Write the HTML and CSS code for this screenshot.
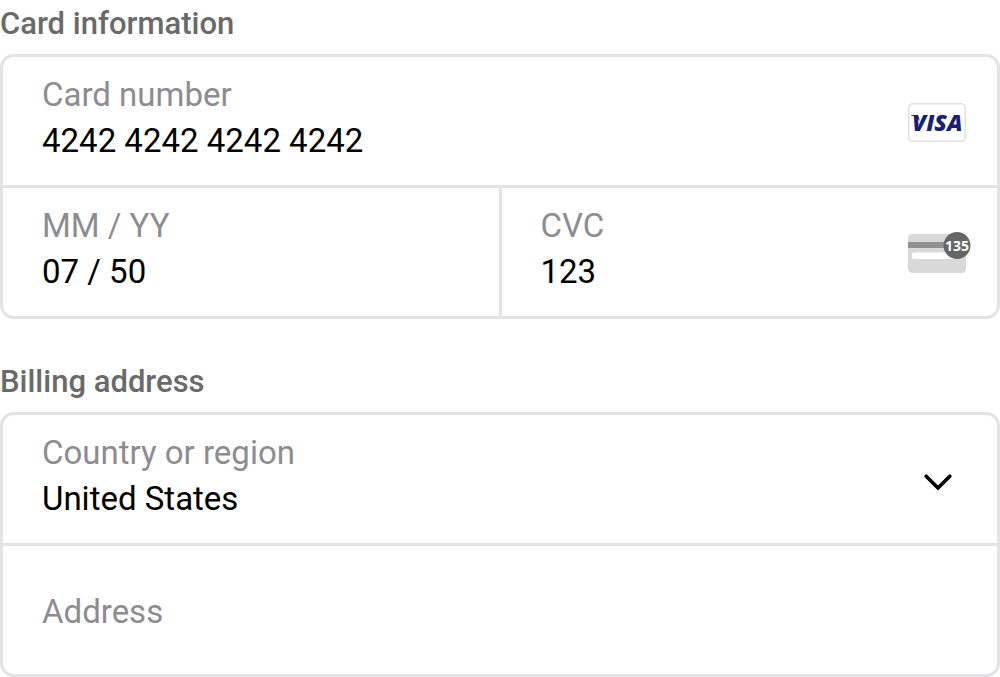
FILE: index.html
```html
<!DOCTYPE html>
<html lang="en">
<head>
<meta charset="utf-8">
<meta name="viewport" content="width=device-width, initial-scale=1">
<title>Payment details</title>
<link rel="stylesheet" href="styles.css">
</head>
<body>
<form class="payment">
  <section class="section">
    <h2 class="heading">Card information</h2>
    <div class="panel">
      <div class="row">
        <div class="field">
          <label class="label" for="number">Card number</label>
          <input class="value" id="number" type="text" inputmode="numeric" value="4242 4242 4242 4242">
        </div>
        <svg class="card-icon" viewBox="0 0 63 42" role="img" aria-label="Visa">
          <rect x="0.75" y="3.75" width="56.5" height="37.5" rx="4" fill="#fff" stroke="#e0e0e0" stroke-width="1.5"/>
          <path d="M3 15h7l2 6C9.500 17.600 6.500 16.200 3 15.600z" fill="#1a1f71"/>
          <text class="visa" x="4" y="31">VISA</text>
        </svg>
      </div>
      <div class="row split">
        <div class="cell">
          <div class="field">
            <label class="label" for="expiry">MM / YY</label>
            <input class="value" id="expiry" type="text" value="07 / 50">
          </div>
        </div>
        <div class="cell">
          <div class="field">
            <label class="label" for="cvc">CVC</label>
            <input class="value" id="cvc" type="text" inputmode="numeric" value="123">
          </div>
          <svg class="card-icon" viewBox="0 0 63 42" aria-hidden="true">
            <rect y="3" width="58" height="39" rx="4.500" fill="#d9d9d9"/>
            <path d="M0 11h40v6H0z" fill="#919191"/>
            <rect x="4" y="21.500" width="46" height="6.500" rx="2" fill="#fff"/>
            <circle cx="49" cy="14.500" r="13.500" fill="#666"/>
            <text class="digits" x="49" y="20">135</text>
          </svg>
        </div>
      </div>
    </div>
  </section>

  <section class="section">
    <h2 class="heading">Billing address</h2>
    <div class="panel">
      <div class="row">
        <div class="field">
          <label class="label" for="country">Country or region</label>
          <select class="value" id="country">
            <option>United States</option>
          </select>
        </div>
        <svg class="chevron" viewBox="0 0 28 18" aria-hidden="true">
          <path d="M2.200 3.200L14 15 25.800 3.200" fill="none" stroke="#000" stroke-width="3.600" stroke-linecap="round" stroke-linejoin="miter"/>
        </svg>
      </div>
      <div class="row">
        <input class="value single" type="text" placeholder="Address" aria-label="Address">
      </div>
    </div>
  </section>
</form>
</body>
</html>
```
FILE: styles.css
```css
* {
  box-sizing: border-box;
}

body {
  margin: 0;
  background: #fff;
  font-family: Roboto, "Liberation Sans", sans-serif;
}

.payment {
  display: flex;
  flex-direction: column;
  gap: 39px;
}

.section {
  display: flex;
  flex-direction: column;
  gap: 6px;
}

.heading {
  margin: 0;
  color: #6a6a6a;
  font-size: 31px;
  font-weight: 500;
  line-height: 48px;
}

.panel {
  border: 3px solid #e3e3e5;
  border-radius: 14px;
  overflow: hidden;
}

.row,
.cell {
  display: flex;
  align-items: center;
  min-width: 0;
}

.row + .row {
  border-top: 3px solid #e3e3e5;
}

.split {
  display: grid;
  grid-template-columns: 1fr 1fr;
  gap: 3px;
  background: #e3e3e5;
}

.cell {
  background: #fff;
}

.field {
  display: flex;
  flex: 1;
  flex-direction: column;
  min-width: 0;
  padding: 15px 16px 21px 39px;
}

.label,
.value {
  font-size: 33px;
  line-height: 46px;
}

.label {
  color: #8d8d91;
}

.value {
  appearance: none;
  width: 100%;
  height: 46px;
  margin: 0;
  padding: 0;
  border: 0;
  outline: 0;
  background: transparent;
  color: #000;
  font-family: inherit;
}

.single {
  height: 128px;
  padding: 2px 39px 0;
}

.single::placeholder {
  color: #8d8d91;
  opacity: 1;
}

.card-icon {
  flex: none;
  width: 63px;
  height: 42px;
  margin-right: 26px;
}

.visa {
  fill: #1a1f71;
  font: italic 800 23px "Open Sans", sans-serif;
}

.digits {
  fill: #fff;
  font: 700 14px "Open Sans", sans-serif;
  text-anchor: middle;
}

.chevron {
  flex: none;
  width: 28px;
  height: 18px;
  margin: 6px 45px 0 0;
  pointer-events: none;
}
```
